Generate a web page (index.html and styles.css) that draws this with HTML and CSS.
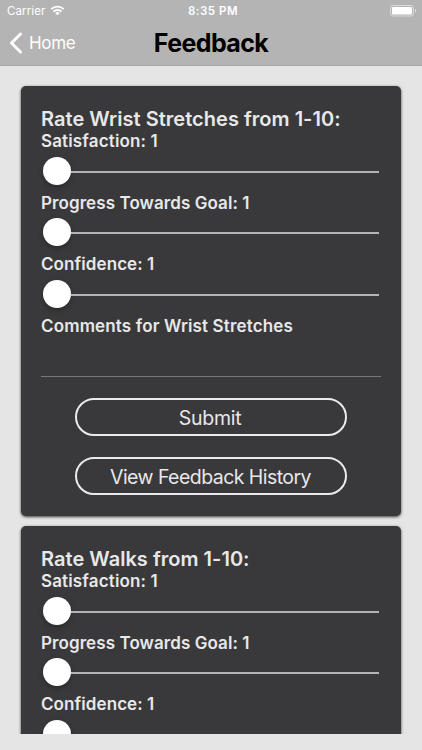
FILE: index.html
```
<!DOCTYPE html>
<html lang="en">
<head>
<meta charset="utf-8">
<title>Feedback</title>
<link rel="stylesheet" href="styles.css">
</head>
<body>
<header class="header">
  <div class="status">
    <div class="carrier"><span class="carrier-name">Carrier</span>
      <svg class="wifi" viewBox="0 0 16 12" width="15" height="11" fill="none" stroke="#fff" stroke-width="2"><path d="M1.2 4.6a9.7 9.7 0 0 1 13.600 0M3.700 7.200a6.100 6.100 0 0 1 8.600 0"/><path d="M8 11.300 5.500 8.800a3.600 3.600 0 0 1 5 0z" fill="#fff" stroke="none"/></svg>
    </div>
    <div class="time"><span>8:35 PM</span></div>
    <svg class="battery" viewBox="0 0 27 12" width="27" height="12"><rect x=".5" y=".5" width="23" height="10.5" rx="2.5" fill="none" stroke="#dadada"/><rect x="2" y="2" width="20" height="7.5" rx="1.2" fill="#fff"/><path d="M25 3.800c1.600.7 1.600 3.200 0 3.900z" fill="#dadada"/></svg>
  </div>
  <div class="nav">
    <div class="back"><svg viewBox="0 0 14 22" width="14" height="22" fill="none" stroke="#fff" stroke-width="3" stroke-linecap="round" stroke-linejoin="round"><path d="M11.500 2 2.500 11l9 9"/></svg><span>Home</span></div>
    <h1 class="page-title"><span>Feedback</span></h1>
    <div></div>
  </div>
</header>
<main class="list">
  <section class="card">
    <h2 class="card-title"><span>Rate Wrist Stretches from 1-10:</span></h2>
    <div class="label satisfaction"><span>Satisfaction: 1</span></div>
    <div class="slider"><i class="thumb"></i><i class="track"></i></div>
    <div class="label progress"><span>Progress Towards Goal: 1</span></div>
    <div class="slider"><i class="thumb"></i><i class="track"></i></div>
    <div class="label confidence"><span>Confidence: 1</span></div>
    <div class="slider"><i class="thumb"></i><i class="track"></i></div>
    <div class="label comments"><span>Comments for Wrist Stretches</span></div>
    <div class="field"></div>
    <div class="button submit"><span>Submit</span></div>
    <div class="button history"><span>View Feedback History</span></div>
  </section>
  <section class="card">
    <h2 class="card-title walks"><span>Rate Walks from 1-10:</span></h2>
    <div class="label satisfaction"><span>Satisfaction: 1</span></div>
    <div class="slider"><i class="thumb"></i><i class="track"></i></div>
    <div class="label progress"><span>Progress Towards Goal: 1</span></div>
    <div class="slider"><i class="thumb"></i><i class="track"></i></div>
    <div class="label confidence"><span>Confidence: 1</span></div>
    <div class="slider"><i class="thumb"></i><i class="track"></i></div>
  </section>
</main>
</body>
</html>
```
FILE: styles.css
```
* { box-sizing: border-box; }
body {
  margin: 0;
  height: 750px;
  overflow: hidden;
  background: #e5e5e5;
  font-family: Inter, "Liberation Sans", sans-serif;
  color: #e8e8e8;
}
.header {
  height: 66px;
  background: #b4b4b4;
  border-bottom: 1px solid #a9a9aa;
  color: #fff;
}
.status {
  display: grid;
  grid-template-columns: 1fr auto 1fr;
  align-items: center;
  height: 22px;
  padding: 0 5px 0 7px;
  font-size: 11.5px;
}
.carrier { display: flex; align-items: center; gap: 5px; letter-spacing: 0.1px; }
.wifi { margin-top: -1px; }
.time { padding-left: 2px; font-weight: 600; letter-spacing: 0.5px; }
.battery { justify-self: end; margin-top: -1px; }
.nav {
  display: grid;
  grid-template-columns: 1fr auto 1fr;
  align-items: center;
  height: 41px;
  padding: 0 9px;
}
.back { display: flex; align-items: center; gap: 6px; font-size: 17px; letter-spacing: -0.3px; }
.page-title { margin: 0; font-size: 25px; line-height: 30px; font-weight: 700; color: #000; letter-spacing: -0.6px; }
.list {
  height: 668px;
  padding: 20px 21px 0;
  overflow: hidden;
}
.card {
  height: 430px;
  margin-bottom: 10px;
  padding: 21px 20px 0;
  border-radius: 5px;
  background: #39393b;
  box-shadow: 0 1px 3px rgba(0, 0, 0, .75);
}
.card-title { margin: 0; font-size: 20px; line-height: 24px; font-weight: 600; letter-spacing: 0.03px; white-space: nowrap; }
.label { font-size: 17px; line-height: 21px; font-weight: 600; letter-spacing: 0.15px; white-space: nowrap; }
.progress, .confidence { letter-spacing: 0.08px; }
.slider { display: flex; align-items: center; height: 40.5px; padding: 0 2px 3px; }
.thumb { width: 28px; height: 28px; border-radius: 50%; background: #fff; box-shadow: 0 2px 5px rgba(0, 0, 0, .3); }
.track { flex: 1; height: 2px; margin-top: 2px; background: #b4b3b6; }
.field { height: 40.5px; border-bottom: 1px solid #74777c; }
.button {
  display: flex;
  align-items: center;
  justify-content: center;
  width: 272px;
  height: 38px;
  margin: 21px auto 0;
  padding-top: 2px;
  border: 2px solid #ebebeb;
  border-radius: 19px;
  font-size: 19.5px;
  font-weight: 400;
}
.submit { padding-right: 2px; letter-spacing: -0.25px; }
.history { padding-right: 1px; letter-spacing: -0.55px; }
```
